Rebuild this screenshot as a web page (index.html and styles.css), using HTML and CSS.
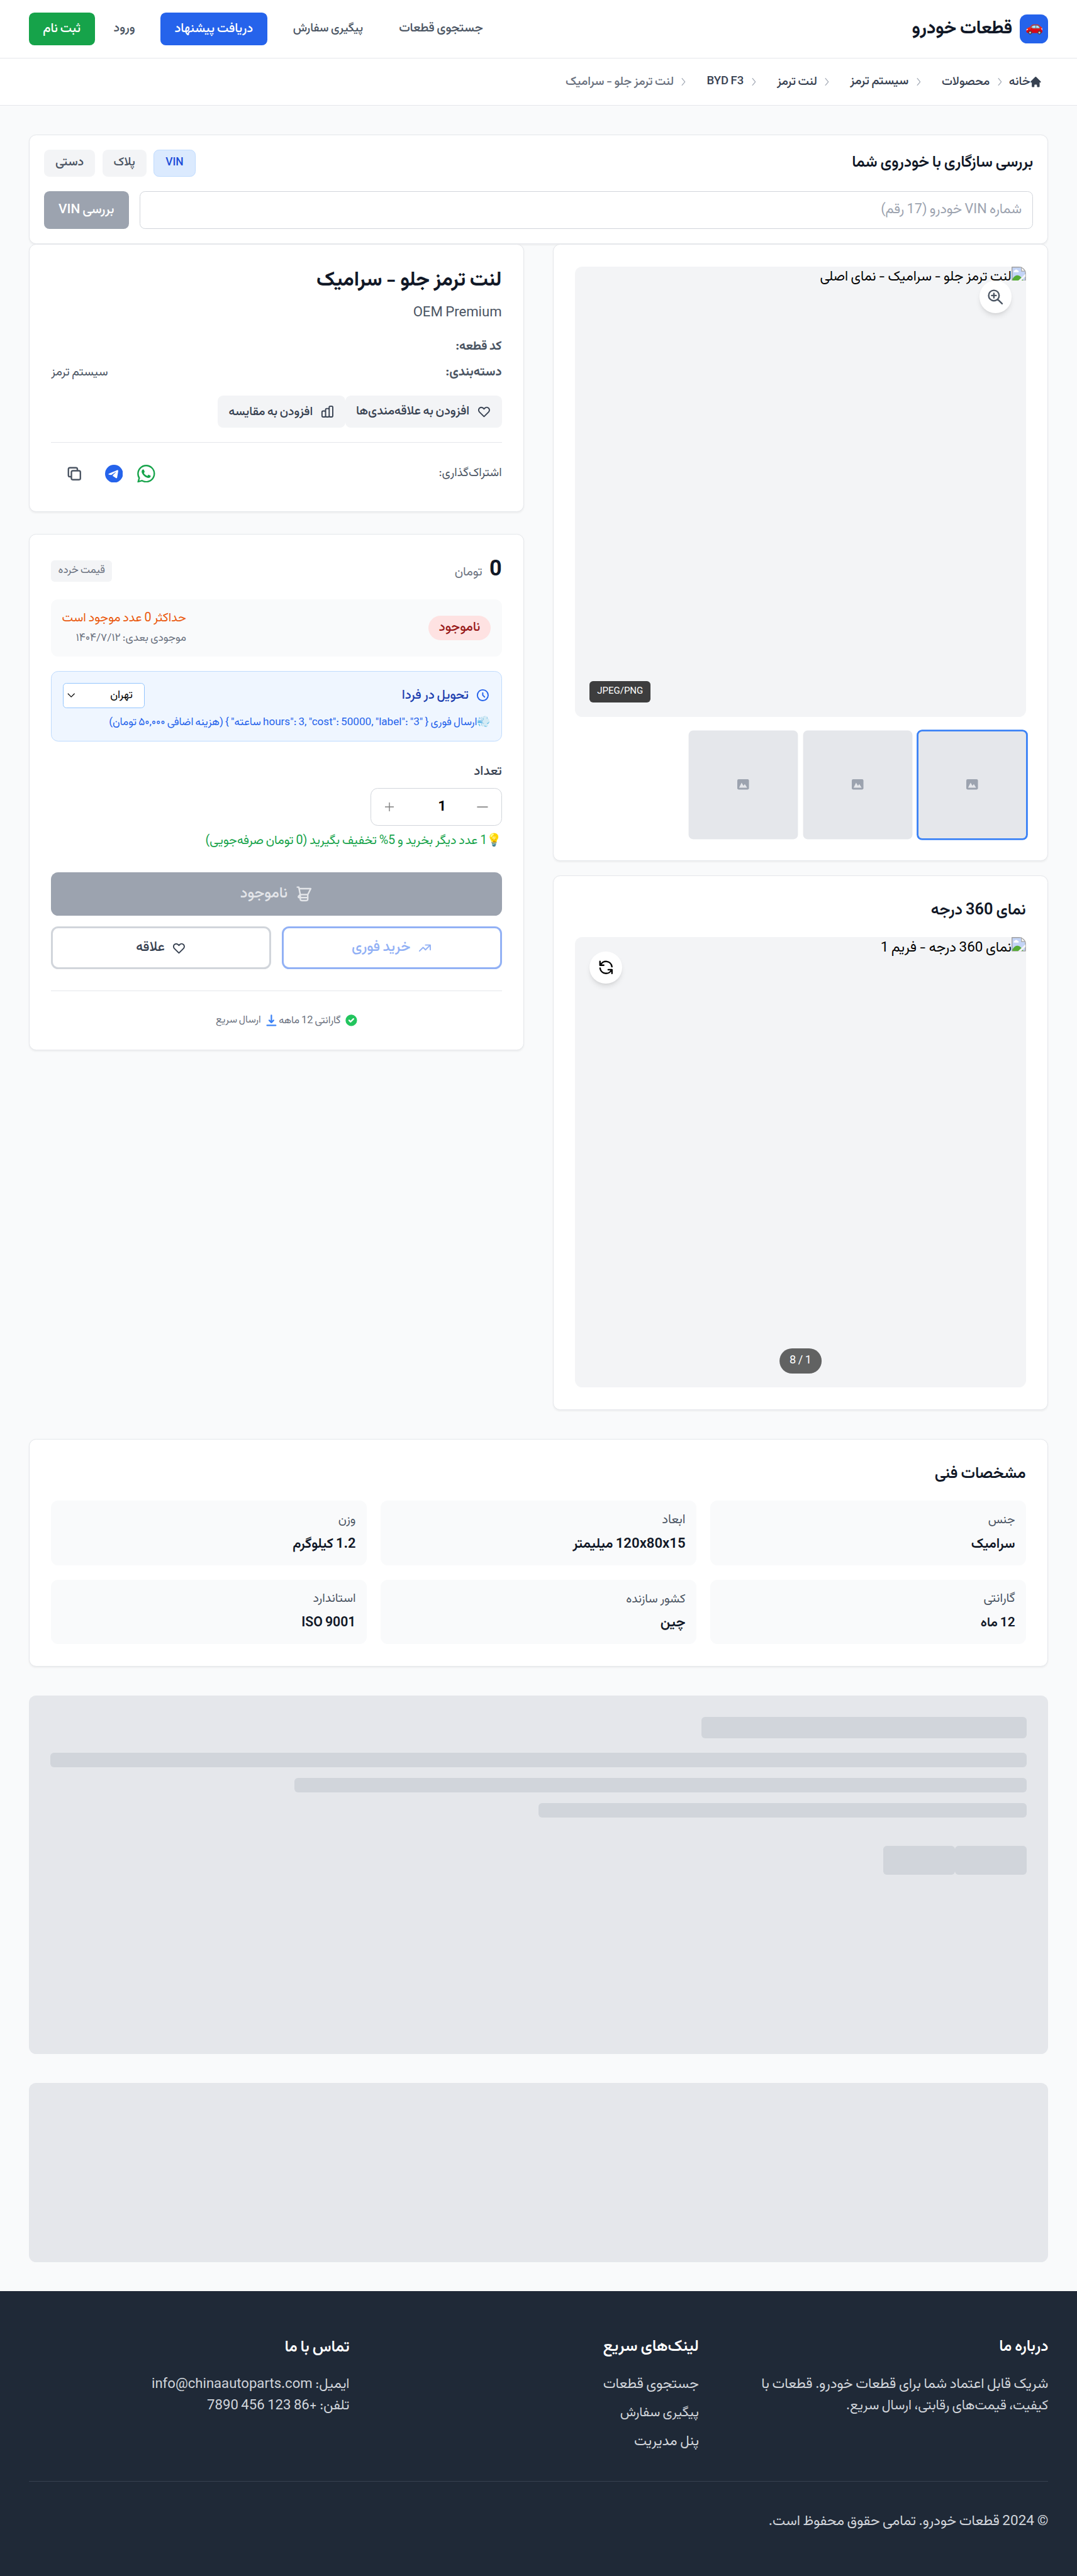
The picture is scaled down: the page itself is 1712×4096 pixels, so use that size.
FILE: index.html
```html
<!DOCTYPE html>
<html lang="fa" dir="rtl">
<head>
<meta charset="utf-8">
<title>لنت ترمز جلو - سرامیک</title>
<link rel="stylesheet" href="styles.css">
</head>
<body>
<header class="site-header">
  <div class="brand">
    <span class="brand-logo">🚗</span>
    <span class="brand-name k101">قطعات خودرو</span>
  </div>
  <nav class="main-nav">
    <a class="nav-search k99">جستجوی قطعات</a>
    <a class="nav-track k94">پیگیری سفارش</a>
    <a class="btn-quote k101">دریافت پیشنهاد</a>
    <a class="nav-login k98">ورود</a>
    <a class="btn-signup k101">ثبت نام</a>
  </nav>
</header>

<nav class="breadcrumb">
  <svg class="icon-home" viewBox="0 0 20 20" fill="currentColor"><path d="M10.707 2.293a1 1 0 00-1.414 0l-7 7a1 1 0 001.414 1.414L4 10.414V17a1 1 0 001 1h2a1 1 0 001-1v-2a1 1 0 011-1h2a1 1 0 011 1v2a1 1 0 001 1h2a1 1 0 001-1v-6.586l.293.293a1 1 0 001.414-1.414l-7-7z"/></svg>
  <a class="crumb crumb-home k97">خانه</a>
  <svg class="sep" viewBox="0 0 5 9"><path d="M.8.5 4.2 4.5.8 8.500"/></svg>
  <a class="crumb k96">محصولات</a>
  <svg class="sep" viewBox="0 0 5 9"><path d="M.8.5 4.2 4.5.8 8.500"/></svg>
  <a class="crumb k98">سیستم ترمز</a>
  <svg class="sep" viewBox="0 0 5 9"><path d="M.8.5 4.2 4.5.8 8.500"/></svg>
  <a class="crumb k97">لنت ترمز</a>
  <svg class="sep" viewBox="0 0 5 9"><path d="M.8.5 4.2 4.5.8 8.500"/></svg>
  <a class="crumb k93">BYD F3</a>
  <svg class="sep" viewBox="0 0 5 9"><path d="M.8.5 4.2 4.5.8 8.500"/></svg>
  <span class="crumb crumb-current k96">لنت ترمز جلو - سرامیک</span>
</nav>

<main class="page">
  <section class="card compat">
    <div class="compat-head">
      <h2 class="k96">بررسی سازگاری با خودروی شما</h2>
      <div class="tabs">
        <button class="tab tab-vin active k88">VIN</button>
        <button class="tab tab-plate k95">پلاک</button>
        <button class="tab tab-manual k99">دستی</button>
      </div>
    </div>
    <div class="compat-form">
      <input class="vin-input k95" type="text" placeholder="شماره VIN خودرو (17 رقم)">
      <button class="vin-submit k92">بررسی VIN</button>
    </div>
  </section>

  <div class="columns">
    <div class="col-gallery">
      <section class="card">
        <div class="stage">
          <div class="broken">
            <svg class="broken-icon" viewBox="0 0 16 16"><path d="M.5.500H11L15.500 5V15.500H.5z" fill="#c3d4f6" stroke="#a0a0a0"/><path d="M11 .5V5h4.500z" fill="#fff" stroke="#a0a0a0" stroke-width=".8"/><path d="M2.500 6.200a1.400 1.400 0 011-2 1.800 1.800 0 013.300 0 1.200 1.200 0 01.9 2z" fill="#fff"/><path d="M1 15.500v-1.800C3 10.500 5 9.300 7.500 9.800c2 .4 4 2.200 5.500 5.700z" fill="#56ac36"/><path d="M7 16l8.500-8v2.800L10.500 16z" fill="#f3f4f6"/></svg>
            <span class="k96">لنت ترمز جلو - سرامیک - نمای اصلی</span>
          </div>
          <button class="round-btn zoom-btn"><svg class="icon-20" viewBox="0 0 24 24"><path d="M21 21l-6-6m2-5a7 7 0 11-14 0 7 7 0 0114 0zM10 7v3m0 0v3m0-3h3m-3 0H7"/></svg></button>
          <span class="format-badge k88">JPEG/PNG</span>
        </div>
        <div class="thumbs">
          <div class="thumb selected"><svg class="photo" viewBox="0 0 13 12"><rect width="13" height="11.500" rx="1.500"/><path class="hill" d="M2 9.500 4.800 3.800 6.900 7.300 8.400 5.400 11 9.500z"/></svg></div>
          <div class="thumb"><svg class="photo" viewBox="0 0 13 12"><rect width="13" height="11.500" rx="1.500"/><path class="hill" d="M2 9.500 4.800 3.800 6.900 7.300 8.400 5.400 11 9.500z"/></svg></div>
          <div class="thumb"><svg class="photo" viewBox="0 0 13 12"><rect width="13" height="11.500" rx="1.500"/><path class="hill" d="M2 9.500 4.800 3.800 6.900 7.300 8.400 5.400 11 9.500z"/></svg></div>
        </div>
      </section>

      <section class="card">
        <h3 class="card-title k99">نمای 360 درجه</h3>
        <div class="stage">
          <div class="broken">
            <svg class="broken-icon" viewBox="0 0 16 16"><path d="M.5.500H11L15.500 5V15.500H.5z" fill="#c3d4f6" stroke="#a0a0a0"/><path d="M11 .5V5h4.500z" fill="#fff" stroke="#a0a0a0" stroke-width=".8"/><path d="M2.500 6.200a1.400 1.400 0 011-2 1.800 1.800 0 013.300 0 1.200 1.200 0 01.9 2z" fill="#fff"/><path d="M1 15.500v-1.800C3 10.500 5 9.300 7.500 9.800c2 .4 4 2.200 5.500 5.700z" fill="#56ac36"/><path d="M7 16l8.500-8v2.800L10.500 16z" fill="#f3f4f6"/></svg>
            <span class="k98">نمای 360 درجه - فریم 1</span>
          </div>
          <button class="round-btn spin-btn"><svg class="icon-20" viewBox="0 0 24 24"><path d="M4 4v5h.582m15.356 2A8.001 8.001 0 004.582 9m0 0H9m11 11v-5h-.581m0 0a8.003 8.003 0 01-15.357-2m15.357 2H15"/></svg></button>
          <span class="frame-badge k92">1 / 8</span>
        </div>
      </section>
    </div>

    <div class="col-info">
      <section class="card summary">
        <h1 class="k94">لنت ترمز جلو - سرامیک</h1>
        <p class="brand-line k97">OEM Premium</p>
        <dl class="facts">
          <div><dt class="k99">کد قطعه:</dt><dd></dd></div>
          <div><dt class="k101">دسته‌بندی:</dt><dd class="k96">سیستم ترمز</dd></div>
        </dl>
        <div class="actions">
          <button class="soft-btn soft-wish k99"><svg class="icon-16" viewBox="0 0 24 24"><path d="M4.318 6.318a4.500 4.500 0 000 6.364L12 20.364l7.682-7.682a4.500 4.500 0 00-6.364-6.364L12 7.636l-1.318-1.318a4.500 4.500 0 00-6.364 0z"/></svg>افزودن به علاقه‌مندی‌ها</button>
          <button class="soft-btn soft-compare k97"><svg class="icon-16" viewBox="0 0 24 24"><path d="M9 19v-6a2 2 0 00-2-2H5a2 2 0 00-2 2v6a2 2 0 002 2h2a2 2 0 002-2zm0 0V9a2 2 0 012-2h2a2 2 0 012 2v10m-6 0a2 2 0 002 2h2a2 2 0 002-2m0 0V5a2 2 0 012-2h2a2 2 0 012 2v14a2 2 0 01-2 2h-2a2 2 0 01-2-2z"/></svg>افزودن به مقایسه</button>
        </div>
        <div class="share">
          <span class="share-label k94">اشتراک‌گذاری:</span>
          <div class="share-icons">
            <a class="share-link whatsapp"><svg class="icon-20 solid" viewBox="0 0 24 24"><path d="M17.472 14.382c-.297-.149-1.758-.867-2.030-.967-.273-.099-.471-.148-.670.150-.197.297-.767.966-.940 1.164-.173.199-.347.223-.644.075-.297-.150-1.255-.463-2.390-1.475-.883-.788-1.480-1.761-1.653-2.059-.173-.297-.018-.458.130-.606.134-.133.298-.347.446-.520.149-.174.198-.298.298-.497.099-.198.050-.371-.025-.520-.075-.149-.669-1.612-.916-2.207-.242-.579-.487-.500-.669-.510-.173-.008-.371-.010-.570-.010-.198 0-.520.074-.792.372-.272.297-1.040 1.016-1.040 2.479 0 1.462 1.065 2.875 1.213 3.074.149.198 2.096 3.200 5.077 4.487.709.306 1.262.489 1.694.625.712.227 1.360.195 1.871.118.571-.085 1.758-.719 2.006-1.413.248-.694.248-1.289.173-1.413-.074-.124-.272-.198-.570-.347m-5.421 7.403h-.004a9.870 9.870 0 01-5.031-1.378l-.361-.214-3.741.982.998-3.648-.235-.374a9.860 9.860 0 01-1.510-5.260c.001-5.450 4.436-9.884 9.888-9.884 2.640 0 5.122 1.030 6.988 2.898a9.825 9.825 0 012.893 6.994c-.003 5.450-4.437 9.884-9.885 9.884m8.413-18.297A11.815 11.815 0 0012.050 0C5.495 0 .160 5.335.157 11.892c0 2.096.547 4.142 1.588 5.945L.057 24l6.305-1.654a11.882 11.882 0 005.683 1.448h.005c6.554 0 11.890-5.335 11.893-11.893a11.821 11.821 0 00-3.480-8.413z"/></svg></a>
            <a class="share-link telegram"><svg class="icon-20 solid" viewBox="0 0 24 24"><path d="M11.944 0A12 12 0 0 0 0 12a12 12 0 0 0 12 12 12 12 0 0 0 12-12A12 12 0 0 0 12 0a12 12 0 0 0-.056 0zm4.962 7.224c.1-.002.321.023.465.140a.506.506 0 0 1 .171.325c.016.093.036.306.020.472-.180 1.898-.962 6.502-1.360 8.627-.168.900-.499 1.201-.820 1.230-.696.065-1.225-.460-1.900-.902-1.056-.693-1.653-1.124-2.678-1.800-1.185-.780-.417-1.210.258-1.910.177-.184 3.247-2.977 3.307-3.230.007-.032.014-.150-.056-.212s-.174-.041-.249-.024c-.106.024-1.793 1.140-5.061 3.345-.480.330-.913.490-1.302.480-.428-.008-1.252-.241-1.865-.440-.752-.245-1.349-.374-1.297-.789.027-.216.325-.437.893-.663 3.498-1.524 5.830-2.529 6.998-3.014 3.332-1.386 4.025-1.627 4.476-1.635z"/></svg></a>
            <a class="share-link copy"><svg class="icon-20" viewBox="0 0 24 24"><path d="M8 16H6a2 2 0 01-2-2V6a2 2 0 012-2h8a2 2 0 012 2v2m-6 12h8a2 2 0 002-2v-8a2 2 0 00-2-2h-8a2 2 0 00-2 2v8a2 2 0 002 2z"/></svg></a>
          </div>
        </div>
      </section>

      <section class="card buy">
        <div class="price-row">
          <div class="price"><strong>0</strong><span class="unit k99">تومان</span></div>
          <span class="price-kind k98">قیمت خرده</span>
        </div>
        <div class="stock">
          <span class="stock-pill k104">ناموجود</span>
          <div class="stock-info">
            <span class="stock-max k99">حداکثر 0 عدد موجود است</span>
            <span class="stock-next k101">موجودی بعدی: ۱۴۰۴/۷/۱۲</span>
          </div>
        </div>
        <div class="delivery">
          <div class="delivery-head">
            <span class="delivery-when k102"><svg class="icon-16" viewBox="0 0 24 24"><path d="M12 8v4l3 3m6-3a9 9 0 11-18 0 9 9 0 0118 0z"/></svg>تحویل در فردا</span>
            <span class="city k103">تهران<svg class="city-arrow" viewBox="0 0 9 5"><path d="M.6.500 4.500 4.400 8.400.5"/></svg></span>
          </div>
          <p class="express k100"><span class="emoji">💨</span> ارسال فوری { "hours": 3, "cost": 50000, "label": "3 ساعته" } (هزینه اضافی ۵۰,۰۰۰ تومان)</p>
        </div>
        <span class="qty-label k103">تعداد</span>
        <div class="qty">
          <svg class="qty-minus" viewBox="0 0 12 2"><path d="M0 1h12"/></svg>
          <span class="qty-value">1</span>
          <svg class="qty-plus" viewBox="0 0 10 10"><path d="M0 5h10M5 0v10"/></svg>
        </div>
        <p class="bulk k99"><span class="emoji">💡</span> 1 عدد دیگر بخرید و 5% تخفیف بگیرید (0 تومان صرفه‌جویی)</p>
        <button class="cart-btn k104"><svg class="icon-20" viewBox="0 0 24 24"><path d="M3 3h2l.4 2M7 13h10l4-8H5.400M7 13L5.400 5M7 13l-2.293 2.293c-.630.630-.184 1.707.707 1.707H17M17 13v6a2 2 0 01-2 2H9a2 2 0 01-2-2v-6"/></svg>ناموجود</button>
        <div class="pair">
          <button class="line-btn quick k100"><svg class="icon-16" viewBox="0 0 24 24"><path d="M13 7h8m0 0v8m0-8l-8 8-4-4-6 6"/></svg>خرید فوری</button>
          <button class="line-btn wish k94"><svg class="icon-16" viewBox="0 0 24 24"><path d="M4.318 6.318a4.500 4.500 0 000 6.364L12 20.364l7.682-7.682a4.500 4.500 0 00-6.364-6.364L12 7.636l-1.318-1.318a4.500 4.500 0 00-6.364 0z"/></svg>علاقه</button>
        </div>
        <div class="trust">
          <span class="trust-item k96"><svg class="icon-16 solid green" viewBox="0 0 20 20"><path fill-rule="evenodd" d="M10 18a8 8 0 100-16 8 8 0 000 16zm3.707-9.293a1 1 0 00-1.414-1.414L9 10.586 7.707 9.293a1 1 0 00-1.414 1.414l2 2a1 1 0 001.414 0l4-4z"/></svg>گارانتی 12 ماهه</span>
          <span class="trust-item k93"><svg class="icon-16 solid blue" viewBox="0 0 20 20"><path d="M3 17a1 1 0 011-1h12a1 1 0 110 2H4a1 1 0 01-1-1zm3.293-7.707a1 1 0 011.414 0L9 10.586V3a1 1 0 112 0v7.586l1.293-1.293a1 1 0 111.414 1.414l-3 3a1 1 0 01-1.414 0l-3-3a1 1 0 010-1.414z"/></svg>ارسال سریع</span>
        </div>
      </section>
    </div>
  </div>

  <section class="card specs">
    <h3 class="card-title k98">مشخصات فنی</h3>
    <div class="spec-grid">
      <div class="spec"><span class="k96">جنس</span><strong class="k95">سرامیک</strong></div>
      <div class="spec"><span class="k101">ابعاد</span><strong class="k97">120x80x15 میلیمتر</strong></div>
      <div class="spec"><span class="k97">وزن</span><strong class="k96">1.2 کیلوگرم</strong></div>
      <div class="spec"><span class="k100">گارانتی</span><strong class="k92">12 ماه</strong></div>
      <div class="spec"><span class="k97">کشور سازنده</span><strong class="k97">چین</strong></div>
      <div class="spec"><span class="k98">استاندارد</span><strong class="k93">ISO 9001</strong></div>
    </div>
  </section>

  <div class="skeleton skeleton-reviews">
    <div class="bone bone-title"></div>
    <div class="bone bone-line"></div>
    <div class="bone bone-line bone-75"></div>
    <div class="bone bone-line bone-50"></div>
    <div class="bone-row"><div class="bone bone-btn"></div><div class="bone bone-btn"></div></div>
  </div>
  <div class="skeleton skeleton-related"></div>
</main>

<footer class="site-footer">
  <div class="footer-cols">
    <div>
      <h4 class="k96">درباره ما</h4>
      <p class="k99">شریک قابل اعتماد شما برای قطعات خودرو. قطعات با</p>
      <p class="k95">کیفیت، قیمت‌های رقابتی، ارسال سریع.</p>
    </div>
    <div>
      <h4 class="k99">لینک‌های سریع</h4>
      <ul>
        <li class="k99">جستجوی قطعات</li>
        <li class="k93">پیگیری سفارش</li>
        <li class="k99">پنل مدیریت</li>
      </ul>
    </div>
    <div>
      <h4 class="k97">تماس با ما</h4>
      <p class="k97">ایمیل: info@chinaautoparts.com</p>
      <p class="k97">تلفن: +86 123 456 7890</p>
    </div>
  </div>
  <p class="copyright k99">© 2024 قطعات خودرو. تمامی حقوق محفوظ است.</p>
</footer>
</body>
</html>
```

FILE: styles.css
```css
/* 1rem = 10 design units */
html { font-size: 14.2667px; }
*, *::before, *::after { box-sizing: border-box; }

body { --k: .98; }
.k88 { --k: .875; } .k92 { --k: .917; } .k93 { --k: .93; } .k94 { --k: .94; }
.k95 { --k: .95; } .k96 { --k: .959; } .k97 { --k: .969; } .k98 { --k: .983; }
.k99 { --k: .988; } .k100 { --k: 1; } .k101 { --k: 1.014; } .k102 { --k: 1.021; }
.k103 { --k: 1.026; } .k104 { --k: 1.044; }

body {
  margin: 0;
  min-height: 4096px;
  display: flex;
  flex-direction: column;
  background: #f9fafb;
  color: #000;
  font-family: Vazirmatn, "Noto Sans Arabic", "Noto Sans", "DejaVu Sans", sans-serif;
  word-spacing: -.1em;
  white-space: nowrap;
}
h1, h2, h3, h4, p, ul, dl, dd { margin: 0; padding: 0; }
ul { list-style: none; }
button, input { font: inherit; word-spacing: inherit; border: 0; padding: 0; }
svg { display: block; flex: none; fill: none; stroke: currentColor; stroke-width: 2; stroke-linecap: round; stroke-linejoin: round; }
.solid { fill: currentColor; stroke: none; }
.icon-16 { width: 1.6rem; height: 1.6rem; }
.icon-20 { width: 2rem; height: 2rem; }

/* header */
.site-header {
  height: 6.5rem;
  padding: 0 3.2rem;
  display: flex;
  align-items: center;
  justify-content: space-between;
  background: #fff;
  border-bottom: 1px solid #e5e7eb;
}
.brand { display: flex; align-items: center; gap: .8rem; }
.brand-logo {
  width: 3.2rem; height: 3.2rem;
  display: flex; align-items: center; justify-content: center;
  border-radius: .8rem;
  background: #2563eb;
  font-size: 1.6rem;
  line-height: 1;
}
.brand-name { padding-top: .1rem; font-size: calc(2rem * var(--k)); font-weight: 700; color: #111827; line-height: 2.8rem; }
.main-nav { display: flex; align-items: center; font-weight: 500; color: #4b5563; line-height: 2rem; }
.main-nav a { font-size: calc(1.4rem * var(--k)); }
.nav-search { margin-left: 4rem; }
.nav-track { margin-left: 2.85rem; }
.nav-login { margin: 0 2.8rem 0 2.1rem; }
.btn-quote, .btn-signup {
  height: 3.6rem;
  display: flex; align-items: center; justify-content: center;
  border-radius: .6rem;
  color: #fff;
}
.btn-quote { width: 11.94rem; background: #2563eb; }
.btn-signup { width: 7.36rem; background: #16a34a; }

/* breadcrumb */
.breadcrumb {
  height: 5.3rem;
  padding: 0 3.9rem 0 3.2rem;
  display: flex; align-items: center;
  background: #fff;
  border-bottom: 1px solid #e5e7eb;
  font-weight: 500;
  color: #374151;
  line-height: 2rem;
}
.icon-home { width: 1.45rem; height: 1.45rem; stroke: none; fill: currentColor; margin-left: -.15rem; }
.crumb { font-size: calc(1.4rem * var(--k)); margin-left: 2.35rem; }
.crumb-home { margin-left: .8rem; }
.sep { width: .48rem; height: .86rem; stroke: #9ca3af; stroke-width: .8; margin-left: .85rem; }
.crumb-current { color: #6b7280; margin-left: 0; }

/* page shell */
.page { padding: 3.2rem 3.2rem; }
.card {
  background: #fff;
  border: 1px solid #e5e7eb;
  border-radius: .8rem;
  box-shadow: 0 .1rem .2rem rgba(0, 0, 0, .05);
  padding: calc(2.5rem - 1px);
}
.card-title { padding-top: .1rem; font-size: calc(1.8rem * var(--k)); font-weight: 600; color: #111827; line-height: 2.8rem; margin-bottom: 1.5rem; }

/* compatibility */
.compat { padding: calc(1.7rem - 1px); height: 12.2rem; }
.compat-head { display: flex; align-items: center; justify-content: space-between; height: 3rem; margin-bottom: 1.6rem; }
.compat h2 { font-size: calc(1.8rem * var(--k)); font-weight: 600; color: #111827; line-height: 2.8rem; }
.tabs { display: flex; gap: .8rem; }
.tab { height: 3rem; border-radius: .6rem; background: #f3f4f6; color: #4b5563; font-size: calc(1.4rem * var(--k)); font-weight: 500; line-height: 2rem; }
.tab.active { background: #dbeafe; color: #1d4ed8; border: 1px solid #bfdbfe; }
.tab-vin { width: 4.7rem; }
.tab-plate { width: 4.9rem; }
.tab-manual { width: 5.7rem; }
.compat-form { display: flex; gap: 1.2rem; }
.vin-input { flex: 1; height: 4.2rem; padding: 0 1.2rem; border: 1px solid #d1d5db; border-radius: .6rem; font-size: calc(1.6rem * var(--k)); background: #fff; }
.vin-input::placeholder { color: #9ca3af; opacity: 1; }
.vin-submit { width: 9.45rem; height: 4.2rem; border-radius: .6rem; background: #9ca3af; color: #fff; font-size: calc(1.6rem * var(--k)); font-weight: 500; }

/* two columns */
.columns { display: grid; grid-template-columns: 1fr 1fr; gap: 3.2rem; align-items: start; }
.col-gallery { display: grid; gap: 1.6rem; }
.col-info { display: grid; gap: 2.4rem; }

.stage { position: relative; aspect-ratio: 1; background: #f3f4f6; border-radius: .8rem; overflow: hidden; }
.broken { display: flex; font-size: 1.6rem; line-height: 2.4rem; }
.broken span { padding-top: .05rem; font-size: calc(1.6rem * var(--k)); }
.broken-icon { width: 1.6rem; height: 1.6rem; stroke: none; stroke-width: 1; }
.round-btn {
  position: absolute; top: 1.6rem;
  width: 3.6rem; height: 3.6rem;
  display: flex; align-items: center; justify-content: center;
  border-radius: 50%;
  background: #fff;
  box-shadow: 0 .4rem .6rem -.1rem rgba(0, 0, 0, .1), 0 .2rem .4rem -.2rem rgba(0, 0, 0, .1);
}
.zoom-btn { right: 1.6rem; color: #4b5563; }
.spin-btn { left: 1.6rem; color: #000; }
.format-badge {
  position: absolute; left: 1.6rem; bottom: 1.6rem;
  width: 6.8rem; height: 2.4rem;
  border-radius: .4rem;
  background: rgba(0, 0, 0, .75);
  color: #fff;
  font-size: calc(1.2rem * var(--k));
  line-height: 2.4rem;
  text-align: center;
}
.frame-badge {
  position: absolute; left: 50%; bottom: 1.6rem;
  transform: translateX(-50%);
  width: 4.75rem; height: 2.8rem;
  border-radius: 1.4rem;
  background: rgba(0, 0, 0, .6);
  color: #fff;
  font-size: calc(1.4rem * var(--k));
  line-height: 2.8rem;
  text-align: center;
}
.thumbs { display: grid; grid-template-columns: repeat(4, 1fr); gap: .8rem; margin-top: 1.6rem; }
.thumb {
  aspect-ratio: 1;
  display: flex; align-items: center; justify-content: center;
  border-radius: .4rem;
  background: #e5e7eb;
  box-shadow: 0 0 0 .1rem #e5e7eb;
}
.thumb.selected { box-shadow: 0 0 0 .2rem #3b82f6; }
.photo { width: 1.3rem; height: 1.2rem; fill: #9ca3af; stroke: none; }
.photo .hill { fill: #e5e7eb; }

/* summary */
.summary h1 { font-size: calc(2.4rem * var(--k)); font-weight: 700; color: #111827; line-height: 3.2rem; }
.brand-line { margin-top: .8rem; font-size: calc(1.6rem * var(--k)); line-height: 2.4rem; color: #4b5563; }
.facts { margin-top: 1.6rem; display: grid; gap: .8rem; color: #4b5563; line-height: 2rem; }
.facts div { display: flex; justify-content: space-between; height: 2rem; }
.facts dt { font-size: calc(1.4rem * var(--k)); font-weight: 700; }
.facts dd { font-size: calc(1.4rem * var(--k)); }
.actions { display: flex; margin-top: 1.6rem; }
.soft-btn {
  height: 3.6rem;
  padding: 0 1.2rem;
  display: flex; align-items: center; gap: .8rem;
  border-radius: .6rem;
  background: #f3f4f6;
  color: #374151;
  font-size: calc(1.4rem * var(--k));
  font-weight: 500;
}
.soft-wish { width: 17.45rem; }
.soft-compare { width: 14.2rem; }
.share { display: flex; align-items: center; justify-content: space-between; margin-top: 1.6rem; padding-top: calc(1.7rem - 1px); border-top: 1px solid #e5e7eb; }
.share-label { font-size: calc(1.4rem * var(--k)); color: #4b5563; line-height: 2rem; }
.share-icons { display: flex; padding-left: .8rem; }
.share-link { padding: .8rem; }
.whatsapp { color: #16a34a; }
.telegram { color: #2563eb; }
.copy { color: #4b5563; margin-right: .8rem; }

/* buy box */
.price-row { display: flex; align-items: center; justify-content: space-between; height: 3.2rem; }
.price { display: flex; align-items: baseline; gap: .8rem; padding-top: .2rem; line-height: 3.2rem; }
.price strong { font-size: 2.4rem; color: #111827; }
.unit { font-size: calc(1.4rem * var(--k)); color: #6b7280; }
.price-kind { width: 6.8rem; height: 2.4rem; margin-top: .1rem; border-radius: .4rem; background: #f3f4f6; color: #6b7280; font-size: calc(1.2rem * var(--k)); line-height: 2.3rem; text-align: center; }
.stock { display: flex; align-items: center; justify-content: space-between; height: 6.4rem; margin-top: 1.6rem; padding: 1.2rem; border-radius: .8rem; background: #f9fafb; }
.stock-pill { width: 7rem; height: 2.8rem; border-radius: 1.4rem; background: #fee2e2; color: #991b1b; font-size: calc(1.4rem * var(--k)); font-weight: 500; line-height: 2.7rem; text-align: center; }
.stock-info { display: grid; gap: .4rem; }
.stock-max { font-size: calc(1.4rem * var(--k)); line-height: 2rem; color: #ea580c; }
.stock-next { font-size: calc(1.2rem * var(--k)); line-height: 1.6rem; color: #6b7280; }
.delivery { margin-top: 1.6rem; height: 7.85rem; padding: calc(1.3rem - 1px); border: 1px solid #bfdbfe; border-radius: .8rem; background: #eff6ff; }
.delivery-head { display: flex; align-items: center; justify-content: space-between; height: 2.85rem; }
.delivery-when { display: flex; align-items: center; gap: .8rem; font-size: calc(1.4rem * var(--k)); font-weight: 500; color: #1e40af; }
.delivery-when svg { color: #2563eb; }
.city { width: 9.15rem; height: 2.8rem; padding: 0 1.3rem 0 .4rem; display: flex; align-items: center; justify-content: space-between; border: 1px solid #93c5fd; border-radius: .4rem; background: #fff; font-size: calc(1.2rem * var(--k)); }
.city-arrow { width: .87rem; height: .5rem; stroke-width: .9; stroke-linecap: butt; }
.express { margin-top: .8rem; font-size: calc(1.2rem * var(--k)); line-height: 1.6rem; color: #2563eb; }
.express .emoji { margin-left: -.25rem; }
.bulk .emoji { margin-left: -.4rem; }
.qty-label { display: block; margin-top: 2.4rem; font-size: calc(1.4rem * var(--k)); font-weight: 500; line-height: 2rem; color: #374151; }
.qty { width: 14.6rem; height: 4.2rem; margin-top: .8rem; padding: 0 1.45rem 0 1.55rem; display: flex; align-items: center; justify-content: space-between; border: 1px solid #d1d5db; border-radius: .8rem; color: #7f7f7f; }
.qty svg { stroke-linecap: butt; stroke-width: 1; }
.qty-minus { width: 1.25rem; height: .2rem; }
.qty .qty-minus { stroke-width: 1.5; }
.qty-plus { width: .98rem; height: .98rem; }
.qty-value { margin: 0 -.3rem 0 1.2rem; color: #000; font-size: 1.6rem; font-weight: 600; }
.bulk { margin-top: .8rem; font-size: calc(1.4rem * var(--k)); line-height: 2rem; color: #16a34a; }
.cart-btn { width: 100%; height: 4.8rem; margin-top: 2.4rem; display: flex; align-items: center; justify-content: center; gap: .8rem; border-radius: .8rem; background: #9ca3af; color: #e3e5e9; font-size: calc(1.6rem * var(--k)); font-weight: 500; }
.pair { display: grid; grid-template-columns: 1fr 1fr; gap: 1.2rem; margin-top: 1.2rem; }
.line-btn { height: 4.8rem; display: flex; align-items: center; justify-content: center; gap: .8rem; border-radius: .8rem; background: #fff; font-size: calc(1.6rem * var(--k)); font-weight: 500; }
.quick { border: 3px solid #92b1f5; color: #92b1f5; }
.wish { border: 3px solid #d1d5db; color: #374151; }
.trust { display: flex; justify-content: center; margin-top: 2.4rem; padding: calc(2.5rem - 1px) 0 0 2.4rem; border-top: 1px solid #e5e7eb; color: #6b7280; }
.trust-item { display: flex; align-items: center; gap: .4rem; height: 1.6rem; font-size: calc(1.2rem * var(--k)); }
.green { color: #22c55e; }
.blue { color: #3b82f6; }

/* specs */
.specs { margin-top: 3.2rem; height: 25.4rem; }
.spec-grid { display: grid; grid-template-columns: repeat(3, 1fr); gap: 1.6rem; }
.spec { height: 7.2rem; padding: 1.2rem; display: grid; grid-template-rows: 2rem 2.4rem; gap: .4rem; border-radius: .8rem; background: #f9fafb; }
.spec span { font-size: calc(1.4rem * var(--k)); line-height: 2rem; color: #4b5563; }
.spec strong { padding-top: .1rem; font-size: calc(1.6rem * var(--k)); font-weight: 600; line-height: 2.4rem; color: #111827; }

/* loading placeholders */
.skeleton { margin-top: 3.2rem; border-radius: .8rem; background: #e5e7eb; }
.skeleton-reviews { height: 40rem; padding: 2.4rem; }
.skeleton-related { height: 20rem; }
.bone { border-radius: .4rem; background: #d1d5db; }
.bone-title { width: 33.333%; height: 2.4rem; margin-bottom: 1.6rem; }
.bone-line { height: 1.6rem; margin-bottom: 1.2rem; }
.bone-75 { width: 75%; }
.bone-50 { width: 50%; }
.bone-row { display: flex; margin-top: 3.2rem; }
.bone-btn { width: 8rem; height: 3.2rem; }

/* footer */
.site-footer { flex: 1; padding: 4.9rem 3.2rem 0; background: #1f2937; color: #d1d5db; line-height: 2.4rem; }
.footer-cols { display: grid; grid-template-columns: repeat(3, 1fr); gap: 3.2rem; }
.site-footer h4 { font-size: calc(1.8rem * var(--k)); font-weight: 600; line-height: 2.8rem; margin-bottom: 1.55rem; color: #fff; }
.footer-cols p, .footer-cols li { font-size: calc(1.6rem * var(--k)); }
.footer-cols li + li { margin-top: .8rem; }
.copyright { margin-top: 3.15rem; padding-top: 3.25rem; border-top: 1px solid #374151; font-size: calc(1.6rem * var(--k)); }
```
